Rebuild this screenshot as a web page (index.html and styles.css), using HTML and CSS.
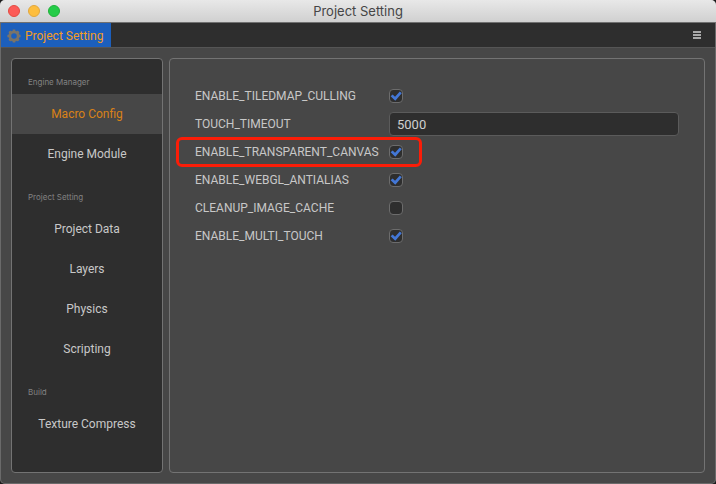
FILE: index.html
```html
<!DOCTYPE html>
<html lang="en">
<head>
<meta charset="utf-8">
<title>Project Setting</title>
<link rel="stylesheet" href="styles.css">
</head>
<body>
<div class="window">
  <header class="titlebar">
    <div class="lights">
      <button class="light close" aria-label="Close"></button>
      <button class="light minimize" aria-label="Minimize"></button>
      <button class="light expand" aria-label="Zoom"></button>
    </div>
    <h1 class="title">Project Setting</h1>
  </header>
  <div class="tabbar">
    <button class="tab">
      <svg class="gear" viewBox="0 0 14 14" aria-hidden="true">
        <circle cx="7" cy="7" r="4.2" fill="none" stroke="currentColor" stroke-width="2.8"/>
        <path d="M7 .4v2M7 11.6v2M.4 7h2M11.6 7h2M2.3 2.3l1.5 1.5M10.2 10.2l1.5 1.5M2.3 11.7l1.5-1.5M10.2 3.8l1.5-1.5" stroke="currentColor" stroke-width="2.6"/>
      </svg>
      <span>Project Setting</span>
    </button>
    <button class="menu" aria-label="Menu">
      <svg viewBox="0 0 8 8" aria-hidden="true"><path d="M0 1h8M0 4h8M0 7h8" stroke="currentColor" stroke-width="2"/></svg>
    </button>
  </div>
  <div class="content">
    <nav class="sidebar">
      <h2 class="group">Engine Manager</h2>
      <a class="item active" href="#macro">Macro Config</a>
      <a class="item" href="#module">Engine Module</a>
      <h2 class="group">Project Setting</h2>
      <a class="item" href="#data">Project Data</a>
      <a class="item" href="#layers">Layers</a>
      <a class="item" href="#physics">Physics</a>
      <a class="item" href="#scripting">Scripting</a>
      <h2 class="group">Build</h2>
      <a class="item" href="#texture">Texture Compress</a>
    </nav>
    <main class="panel">
      <div class="row"><label for="culling">ENABLE_TILEDMAP_CULLING</label><input class="check" type="checkbox" id="culling" checked></div>
      <div class="row"><label for="timeout">TOUCH_TIMEOUT</label><input class="field" type="text" id="timeout" value="5000"></div>
      <div class="row highlight"><label for="canvas">ENABLE_TRANSPARENT_CANVAS</label><input class="check" type="checkbox" id="canvas" checked></div>
      <div class="row"><label for="antialias">ENABLE_WEBGL_ANTIALIAS</label><input class="check" type="checkbox" id="antialias" checked></div>
      <div class="row"><label for="cleanup">CLEANUP_IMAGE_CACHE</label><input class="check" type="checkbox" id="cleanup"></div>
      <div class="row"><label for="touch">ENABLE_MULTI_TOUCH</label><input class="check" type="checkbox" id="touch" checked></div>
    </main>
  </div>
</div>
</body>
</html>
```
FILE: styles.css
```css
*, *::before, *::after { box-sizing: border-box; }
body {
  margin: 0;
  background: #1c1c1c;
  color: #c8c8c8;
  font: 12px/16px Roboto, "Liberation Sans", sans-serif;
}
button { margin: 0; padding: 0; border: 0; background: none; font: inherit; color: inherit; }
.window {
  display: flex;
  flex-direction: column;
  min-height: 100vh;
  border-radius: 5px;
  overflow: hidden;
  background: #474747;
  box-shadow: inset 0 0 0 1px #6a6a6a;
}
.titlebar {
  display: grid;
  grid-template-columns: 1fr auto 1fr;
  align-items: center;
  height: 23px;
  padding: 0 8px;
  border-bottom: 1px solid #707070;
  background: linear-gradient(#e8e8e8, #d0d0d0);
}
.lights { display: flex; gap: 8px; }
.light { width: 12px; height: 12px; border-radius: 50%; }
.close { background: #fc5b57; border: 1px solid #e24b41; }
.minimize { background: #fdbe3f; border: 1px solid #e1a73e; }
.expand { background: #24cc48; border: 1px solid #20b13a; }
.title {
  margin: 0;
  color: #454545;
  font: 400 13px/16px Inter, "Liberation Sans", sans-serif;
}
.tabbar {
  display: flex;
  justify-content: space-between;
  height: 25px;
  margin: 0 1px;
  padding-right: 14px;
  border-bottom: 1px solid #555;
  background: #2e2e2e;
}
.tab {
  display: flex;
  align-items: center;
  gap: 4px;
  padding: 1px 8px 0 6px;
  background: #1c5fbc;
  color: #f39c1f;
}
.gear { width: 14px; height: 14px; color: #7b7468; }
.menu { color: #a9a9a9; }
.menu svg { display: block; width: 8px; height: 8px; }
.content { display: flex; flex: 1; gap: 6px; padding: 10px 11px 11px; }
.sidebar, .panel { border: 1px solid #737373; border-radius: 4px; }
.sidebar { flex: 0 0 152px; background: #2e2e2e; }
.group {
  margin: 0;
  padding: 16px 16px 5px;
  color: #828282;
  font: 400 8px/14px Inter, "Liberation Sans", sans-serif;
}
.item {
  display: block;
  color: #c8c8c8;
  line-height: 40px;
  text-align: center;
  text-decoration: none;
}
.item.active { background: #474747; color: #d98218; }
.panel { flex: 1; min-width: 0; padding: 23px 25px; }
.row {
  position: relative;
  display: grid;
  grid-template-columns: 194px 1fr;
  align-items: center;
  height: 28px;
}
.check {
  appearance: none;
  display: grid;
  width: 14px;
  height: 14px;
  margin: 0;
  border: 1px solid #6c6c6c;
  border-radius: 4px;
  background: #2e2e2e;
}
.check:checked::before {
  content: "";
  background: #4377d6;
  clip-path: polygon(5% 52%, 22% 38%, 42% 57%, 82% 13%, 98% 27%, 44% 90%);
}
.field {
  width: 100%;
  height: 24px;
  padding: 0 7px;
  border: 1px solid #5b5b5b;
  border-radius: 4px;
  background: #2e2e2e;
  color: #d0d0d0;
  font: inherit;
  font-size: 13px;
}
.highlight::after {
  content: "";
  position: absolute;
  inset: -1px auto -1px -19px;
  width: 246px;
  border: 3px solid #fb1d08;
  border-radius: 6px;
  pointer-events: none;
}
```
